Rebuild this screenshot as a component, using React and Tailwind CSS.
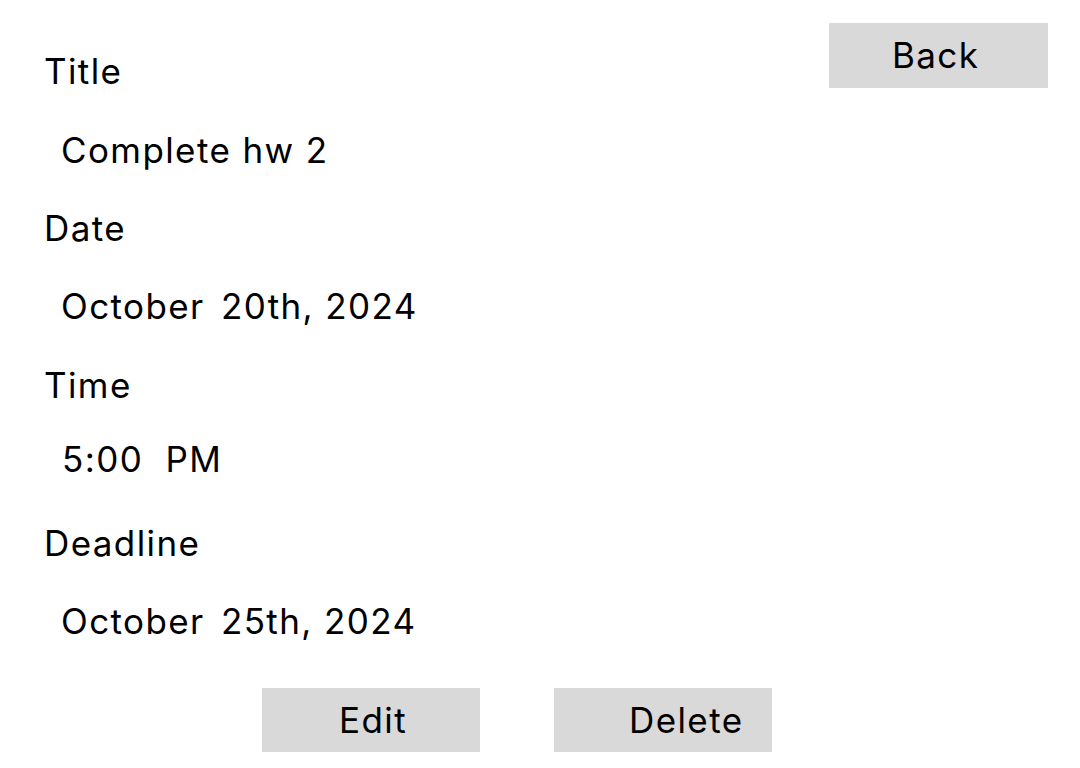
export default function App() {
  const font = { fontFamily: "Inter, 'Noto Sans', sans-serif" };
  return (
    <div className="w-[1080px] h-[768px] bg-white text-black overflow-hidden" style={font}>
      <div className="flex justify-between items-start">
        <div className="flex flex-col pt-[51px] pl-[44px] text-[35px] leading-[40px] tracking-[1.4px] whitespace-pre">
          <div className="h-[79px]">Title</div>
          <div className="h-[78px] pl-[17px]">Complete hw 2</div>
          <div className="h-[78px]">Date</div>
          <div className="h-[79px] pl-[17px]">
            October <span className="ml-[5px]">20th, 2024</span>
          </div>
          <div className="h-[74px]">Time</div>
          <div className="h-[84px] pl-[18px]">5:00  PM</div>
          <div className="h-[78px]">Deadline</div>
          <div className="h-[40px] pl-[17px]">
            October <span className="ml-[5px]">25th, 2024</span>
          </div>
        </div>
        <div className="pt-[23px] pr-[32px]">
          <button className="w-[219px] h-[65px] bg-[#d9d9d9] text-[35px] tracking-[1.4px] text-left pl-[63px]">Back</button>
        </div>
      </div>
      <div className="flex gap-[74px] pl-[262px] mt-[47px]">
        <button className="w-[218px] h-[64px] bg-[#d9d9d9] text-[35px] tracking-[1.4px] text-left pl-[77px]">Edit</button>
        <button className="w-[218px] h-[64px] bg-[#d9d9d9] text-[35px] tracking-[1.4px] text-left pl-[75px]">Delete</button>
      </div>
    </div>
  );
}
